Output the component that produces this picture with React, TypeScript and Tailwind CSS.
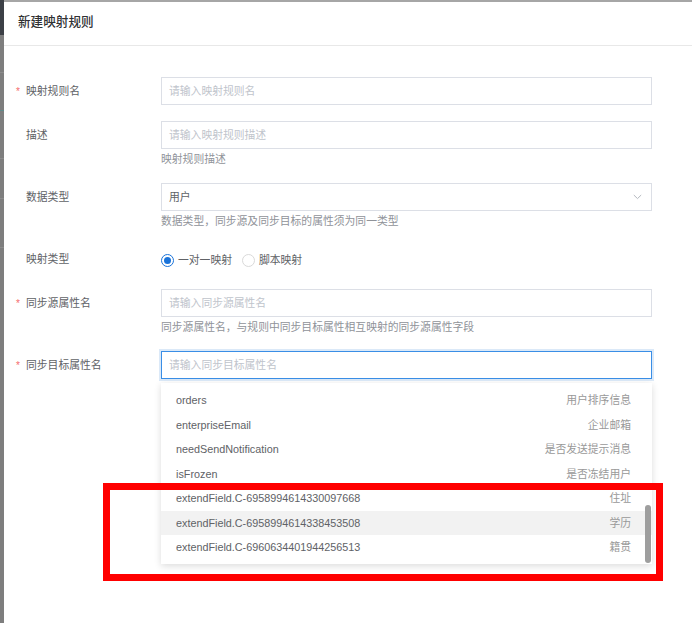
const items = [
  { key: "orders", label: "用户排序信息" },
  { key: "enterpriseEmail", label: "企业邮箱" },
  { key: "needSendNotification", label: "是否发送提示消息" },
  { key: "isFrozen", label: "是否冻结用户" },
  { key: "extendField.C-6958994614330097668", label: "住址" },
  { key: "extendField.C-6958994614338453508", label: "学历", hover: true },
  { key: "extendField.C-6960634401944256513", label: "籍贯" },
]

function Label({ text, required }: { text: string; required?: boolean }) {
  return (
    <div className="flex h-[28px] w-[145px] shrink-0 items-center text-[10.8px] text-[#606266]">
      <span className="w-[10px] pt-[1px] text-[10px] text-[#f56c6c]">{required ? "*" : ""}</span>
      <span>{text}</span>
    </div>
  )
}

function Input({ placeholder }: { placeholder: string }) {
  return (
    <div className="flex h-[28px] w-[491px] items-center border border-[#dcdfe6] px-[7px] text-[10.8px] text-[#c0c4cc]">
      {placeholder}
    </div>
  )
}

function Help({ text }: { text: string }) {
  return <div className="h-[20px] text-[10.8px] leading-[20px] text-[#909399]">{text}</div>
}

export default function App() {
  return (
    <div className="relative flex h-[623px] w-[692px] overflow-hidden bg-white font-['Liberation_Sans','Noto_Sans_CJK_SC',sans-serif]">
      <div className="flex w-[4px] shrink-0 flex-col bg-[#7e7e7e]">
        <div className="h-[35px] bg-[#3c4046]" />
        <div className="mt-[37px] h-px bg-[#8c8c8c]" />
        <div className="mt-[37px] h-px bg-[#5f8a8a]" />
        <div className="mt-[47px] h-px bg-[#8c8c8c]" />
        <div className="mt-[39px] h-px bg-[#8c8c8c]" />
        <div className="mt-[48px] h-px bg-[#8c8c8c]" />
      </div>

      <div className="flex-1 border-t-2 border-[#a6a6a6]">
        <div className="flex h-[44px] items-center border-b border-[#e8e8e8] pb-[2px] pl-[14px] text-[12.6px] font-medium text-[#303133]">
          新建映射规则
        </div>

        <div className="flex flex-col pl-[12px] pt-[31px]">
          <div className="mb-[16px] flex">
            <Label text="映射规则名" required />
            <Input placeholder="请输入映射规则名" />
          </div>

          <div className="mb-[14px] flex">
            <Label text="描述" />
            <div>
              <Input placeholder="请输入映射规则描述" />
              <Help text="映射规则描述" />
            </div>
          </div>

          <div className="mb-[14px] flex">
            <Label text="数据类型" />
            <div>
              <div className="flex h-[28px] w-[491px] items-center justify-between border border-[#dcdfe6] pl-[7px] pr-[9px] text-[10.8px] text-[#606266]">
                <span>用户</span>
                <svg width="9" height="6" viewBox="0 0 9 6" fill="none">
                  <path d="M0.8 1 L4.5 4.6 L8.2 1" stroke="#b4b8bf" strokeWidth="1" />
                </svg>
              </div>
              <Help text="数据类型，同步源及同步目标的属性须为同一类型" />
            </div>
          </div>

          <div className="mb-[16px] flex">
            <Label text="映射类型" />
            <div className="flex h-[28px] items-center pt-[2px] text-[10.8px] text-[#606266]">
              <span className="flex h-[13px] w-[13px] items-center justify-center rounded-full border-[1.5px] border-[#1a73d9]">
                <span className="h-[7px] w-[7px] rounded-full bg-[#1a73d9]" />
              </span>
              <span className="ml-[4px] mr-[10px]">一对一映射</span>
              <span className="h-[13px] w-[13px] rounded-full border border-[#d9d9d9]" />
              <span className="ml-[4px]">脚本映射</span>
            </div>
          </div>

          <div className="mb-[14px] flex">
            <Label text="同步源属性名" required />
            <div>
              <Input placeholder="请输入同步源属性名" />
              <Help text="同步源属性名，与规则中同步目标属性相互映射的同步源属性字段" />
            </div>
          </div>

          <div className="flex">
            <Label text="同步目标属性名" required />
            <div className="relative">
              <div className="flex h-[28px] w-[491px] items-center border border-[#3a8ee6] px-[7px] text-[10.8px] text-[#c0c4cc] shadow-[0_0_0_2px_#dbe9f8]">
                请输入同步目标属性名
              </div>
              <div className="absolute left-0 top-[32px] z-10 w-[491px] bg-white pb-[4px] pt-[5px] shadow-[0_2px_7px_rgba(0,0,0,0.14)]">
                {items.map((it) => (
                  <div
                    key={it.key}
                    className={`flex h-[24.5px] items-center justify-between pl-[15px] pr-[21px] text-[10.8px] ${it.hover ? "bg-[#f2f2f2]" : ""}`}
                  >
                    <span className="text-[#606266]">{it.key}</span>
                    <span className="text-[#999999]">{it.label}</span>
                  </div>
                ))}
                <div className="absolute right-[1px] top-[122px] h-[58px] w-[6px] rounded-full bg-[#9e9e9e]" />
              </div>
            </div>
          </div>
        </div>
      </div>

      <div className="absolute left-[103px] top-[483px] z-20 h-[98px] w-[560px] border-[7px] border-[#ff0000]" />
    </div>
  )
}
